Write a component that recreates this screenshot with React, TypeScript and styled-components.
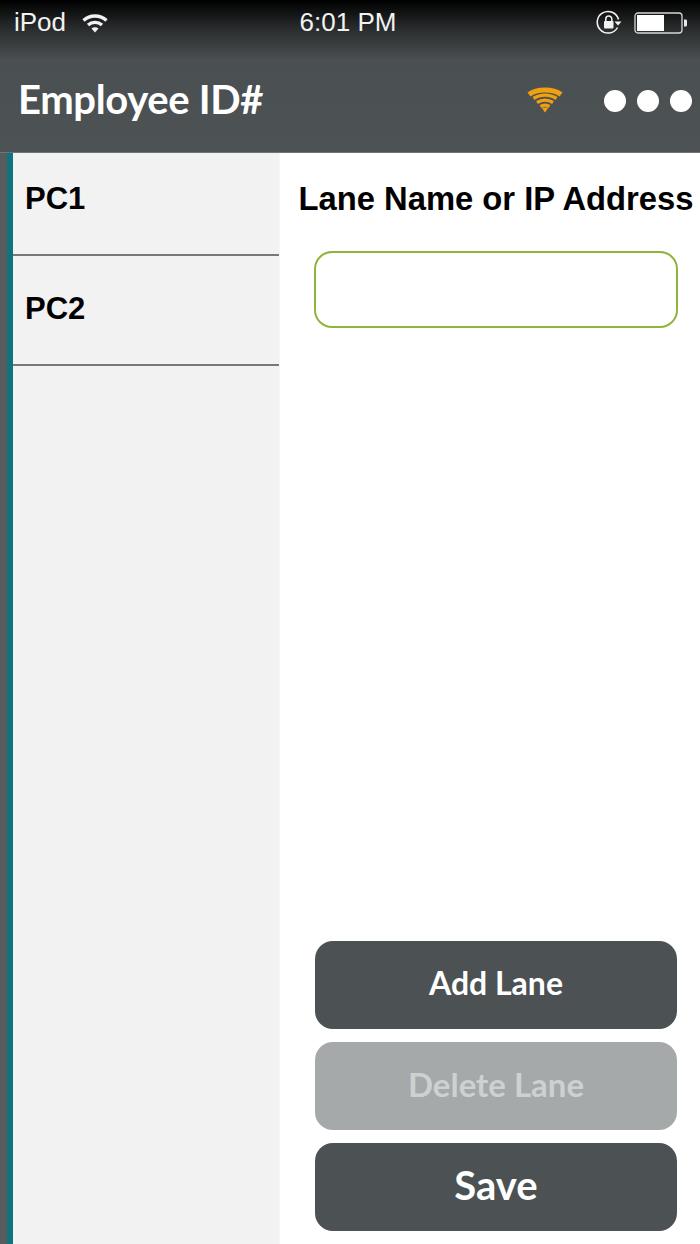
import React from 'react';
import styled, { createGlobalStyle } from 'styled-components';

const GlobalStyle = createGlobalStyle`
  html, body {
    margin: 0;
    padding: 0;
    background: #ffffff;
  }
`;

const Page = styled.div`
  width: 700px;
  height: 1244px;
  display: flex;
  flex-direction: column;
  overflow: hidden;
`;

const Header = styled.header`
  height: 153px;
  flex: none;
  display: flex;
  flex-direction: column;
  background: linear-gradient(180deg, #000000 0px, #2b2e2f 30px, #4a4f51 60px, #4d5254 153px);
  border-bottom: 1px solid #6f7476;
  box-sizing: border-box;
`;

const StatusBar = styled.div`
  height: 45px;
  display: flex;
  align-items: center;
  padding: 0 12px 0 14px;
  color: #f2f2f2;
  font-family: 'Liberation Sans', Arial, sans-serif;
  font-size: 26px;
`;

const StatusLeft = styled.div`
  flex: 1;
  display: flex;
  align-items: center;
  gap: 15px;
`;

const StatusTime = styled.div`
  width: 100px;
  margin-right: 6px;
  text-align: center;
  white-space: nowrap;
`;

const StatusRight = styled.div`
  flex: 1;
  display: flex;
  align-items: center;
  justify-content: flex-end;
  gap: 12px;
`;

const TitleBar = styled.div`
  flex: 1;
  display: flex;
  align-items: center;
  padding: 0 8px 0 18px;
`;

const Title = styled.h1`
  flex: 1;
  margin: 0;
  color: #ffffff;
  font-family: Lato, sans-serif;
  font-size: 40px;
  font-weight: 700;
  line-height: 1;
  letter-spacing: -0.35px;
`;

const SignalSlot = styled.div`
  display: flex;
  margin-top: 1px;
`;

const Dots = styled.div`
  display: flex;
  gap: 11px;
  margin: 4px 0 0 41px;
`;

const Dot = styled.span`
  width: 22px;
  height: 22px;
  border-radius: 50%;
  background: #ffffff;
`;

const Body = styled.main`
  flex: 1;
  display: flex;
  min-height: 0;
`;

const Rail = styled.div`
  width: 280px;
  flex: none;
  box-sizing: border-box;
  border-left: 7px solid #565b5c;
`;

const Sidebar = styled.nav`
  height: 100%;
  box-sizing: border-box;
  border-left: 6px solid #0e7480;
  border-right: 1px solid #f7f7f7;
  background: #f2f2f2;
`;

const LaneRow = styled.div<{ $height: number; $lift: number }>`
  height: ${p => p.$height}px;
  box-sizing: border-box;
  display: flex;
  align-items: center;
  padding: 0 12px ${p => p.$lift}px;
  border-bottom: 2px solid #75797b;
  color: #000000;
  font-family: 'Liberation Sans', Arial, sans-serif;
  font-size: 31px;
  font-weight: 700;
`;

const Panel = styled.section`
  flex: 1;
  display: flex;
  flex-direction: column;
  align-items: center;
  padding: 26px 0 13px 12px;
  background: #ffffff;
`;

const FieldLabel = styled.label`
  color: #000000;
  font-family: 'Liberation Sans', Arial, sans-serif;
  font-size: 32.75px;
  font-weight: 700;
  line-height: 40px;
  white-space: nowrap;
`;

const LaneInput = styled.input`
  width: 364px;
  height: 77px;
  margin-top: 32px;
  box-sizing: border-box;
  border: 2.5px solid #8fb53f;
  border-radius: 18px;
  background: #ffffff;
  outline: none;
`;

const Actions = styled.div`
  margin-top: auto;
  display: flex;
  flex-direction: column;
  gap: 13px;
`;

const ActionButton = styled.button<{ $size: number }>`
  width: 362px;
  height: 88px;
  padding: 0 0 5px;
  border: none;
  border-radius: 18px;
  background: #4c5153;
  color: #ffffff;
  font-family: Lato, sans-serif;
  font-size: ${p => p.$size}px;
  font-weight: 700;

  &:disabled {
    background: #a5a9a9;
    color: #cdd1d1;
  }
`;

const WifiStatus = () => (
  <svg width="28" height="22" viewBox="0 0 28 22" fill="none" stroke="#f2f2f2" strokeWidth="3.4">
    <path d="M2.5 8.5C9 2.5 19 2.5 25.5 8.5" />
    <path d="M7 13C11 9.5 17 9.5 21 13" />
    <path d="M10.5 16.5L14 20.5L17.5 16.5C15.5 14.8 12.500 14.800 10.500 16.500Z" fill="#f2f2f2" stroke="none" />
  </svg>
);

const RotationLock = () => (
  <svg width="26" height="26" viewBox="0 0 26 26" fill="none">
    <path d="M21.500 17.500A10.800 10.800 0 1 1 22.500 9.500" stroke="#f2f2f2" strokeWidth="1.500" />
    <path d="M18.500 11.500H25.500L22 15.500Z" fill="#f2f2f2" />
    <rect x="8" y="11" width="9.500" height="7.500" rx="1" fill="#f2f2f2" />
    <path d="M9.800 11V9A3 3 0 0 1 15.800 9V11" stroke="#f2f2f2" strokeWidth="1.500" />
  </svg>
);

const Battery = () => (
  <svg width="54" height="22" viewBox="0 0 54 22" fill="none">
    <rect x="1" y="1" width="47" height="20" rx="3" stroke="#d5d5d5" strokeWidth="1.300" />
    <rect x="3" y="3" width="27" height="16" fill="#ffffff" />
    <path d="M50 7.500H51.500C52.500 7.500 53 8.200 53 9V13C53 13.800 52.500 14.500 51.500 14.500H50Z" fill="#e8e8e8" />
  </svg>
);

const WifiSignal = () => (
  <svg width="36" height="27" viewBox="0 0 36 27" fill="none" stroke="#f0a010" strokeWidth="3.400">
    <path d="M2 8.500C10 2.500 26 2.500 34 8.500" strokeWidth="5" />
    <path d="M6.500 12.500C13 8 23 8 29.500 12.500" />
    <path d="M10 16.500C15 13.500 21 13.500 26 16.500" />
    <path d="M13.500 20.500C16 19 20 19 22.500 20.500" />
    <path d="M14.500 21.500H21.500L18 26.500Z" fill="#f0a010" stroke="none" />
  </svg>
);

const lanes = [
  { name: 'PC1', height: 103, lift: 10 },
  { name: 'PC2', height: 110, lift: 2 },
];

const App = () => (
  <Page>
    <GlobalStyle />
    <Header>
      <StatusBar>
        <StatusLeft>
          <span>iPod</span>
          <WifiStatus />
        </StatusLeft>
        <StatusTime>6:01 PM</StatusTime>
        <StatusRight>
          <RotationLock />
          <Battery />
        </StatusRight>
      </StatusBar>
      <TitleBar>
        <Title>Employee ID#</Title>
        <SignalSlot>
          <WifiSignal />
        </SignalSlot>
        <Dots>
          <Dot />
          <Dot />
          <Dot />
        </Dots>
      </TitleBar>
    </Header>
    <Body>
      <Rail>
        <Sidebar>
          {lanes.map(lane => (
            <LaneRow key={lane.name} $height={lane.height} $lift={lane.lift}>{lane.name}</LaneRow>
          ))}
        </Sidebar>
      </Rail>
      <Panel>
        <FieldLabel htmlFor="lane">Lane Name or IP Address</FieldLabel>
        <LaneInput id="lane" />
        <Actions>
          <ActionButton $size={32}>Add Lane</ActionButton>
          <ActionButton $size={33} disabled>Delete Lane</ActionButton>
          <ActionButton $size={40}>Save</ActionButton>
        </Actions>
      </Panel>
    </Body>
  </Page>
);

export default App;
